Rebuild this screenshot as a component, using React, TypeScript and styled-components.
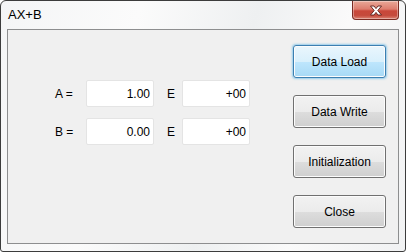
import React from "react";
import styled, { createGlobalStyle } from "styled-components";

const GlobalStyle = createGlobalStyle`
  html, body {
    margin: 0;
    padding: 0;
    background: #ffffff;
  }
  body {
    font-family: "Liberation Sans", Arial, sans-serif;
  }
`;

const Window = styled.div`
  width: 406px;
  height: 252px;
  box-sizing: border-box;
  display: flex;
  flex-direction: column;
  border: 1px solid #3c3c3c;
  border-radius: 6px 6px 3px 3px;
  background: linear-gradient(105deg, #f4f5f6 0%, #fbfbfb 30%, #eef0f1 55%, #fafafa 75%, #f1f2f3 100%);
  overflow: hidden;
`;

const TitleBar = styled.div`
  height: 28px;
  flex: none;
  display: flex;
  justify-content: space-between;
  align-items: flex-start;
`;

const Title = styled.span`
  margin: 6px 0 0 7px;
  font-size: 13px;
  color: #000;
`;

const CloseButton = styled.button`
  width: 47px;
  height: 19px;
  margin-right: 6px;
  padding: 0;
  display: flex;
  align-items: center;
  justify-content: center;
  border: 1px solid #7a2b22;
  border-top: none;
  border-radius: 0 0 4px 4px;
  background: linear-gradient(180deg, #e9a898 0%, #dd7d6e 45%, #c9473a 55%, #c54a3c 80%, #dc8373 100%);
  box-shadow: inset 0 0 0 1px rgba(255, 255, 255, 0.35);
`;

const Client = styled.div`
  flex: 1;
  margin: 0 6px 7px 6px;
  border: 1px solid #8d8e8f;
  background: #f0f0f0;
  display: flex;
  justify-content: space-between;
`;

const Form = styled.div`
  margin: 50px 0 0 47px;
  display: grid;
  grid-template-columns: 31px 68px 28px 68px;
  grid-auto-rows: 27px;
  row-gap: 11px;
  align-items: center;
`;

const Label = styled.span<{ $indent?: number }>`
  font-size: 12px;
  color: #000;
  padding-left: ${(p) => p.$indent ?? 0}px;
`;

const Field = styled.div`
  height: 27px;
  box-sizing: border-box;
  display: flex;
  align-items: center;
  justify-content: flex-end;
  padding-right: 3px;
  background: #ffffff;
  border: 1px solid #e4e4e4;
  border-radius: 2px;
  font-size: 12px;
  color: #000;
`;

const ButtonColumn = styled.div`
  margin: 15px 12px 0 0;
  display: flex;
  flex-direction: column;
  gap: 17px;
`;

const Button = styled.button<{ $active?: boolean }>`
  width: 93px;
  height: 33px;
  padding: 0;
  font-family: "Liberation Sans", Arial, sans-serif;
  font-size: 12px;
  color: #000;
  border-radius: 3px;
  border: 1px solid ${(p) => (p.$active ? "#3c7fb1" : "#707070")};
  background: ${(p) =>
    p.$active
      ? "linear-gradient(180deg, #eaf6fd 0%, #d9f0fc 50%, #bee6fd 51%, #a7d9f5 100%)"
      : "linear-gradient(180deg, #f2f2f2 0%, #ebebeb 50%, #dddddd 51%, #cfcfcf 100%)"};
  box-shadow: ${(p) =>
    p.$active
      ? "inset 0 0 0 1px #fcfcfc, 0 0 2px 1px rgba(75, 175, 230, 0.55)"
      : "inset 0 0 0 1px #fcfcfc"};
`;

function CloseGlyph() {
  return (
    <svg width="14" height="11" viewBox="0 0 14 11">
      <path
        d="M1.5 1 H5 L7 3.6 L9 1 H12.5 L8.8 5.5 L12.5 10 H9 L7 7.4 L5 10 H1.5 L5.2 5.5 Z"
        fill="#ffffff"
        stroke="#5a1e18"
        strokeWidth="0.9"
        strokeLinejoin="round"
      />
    </svg>
  );
}

const rows = [
  { name: "A =", value: "1.00", exp: "+00" },
  { name: "B =", value: "0.00", exp: "+00" },
];

const actions = ["Data Load", "Data Write", "Initialization", "Close"];

export default function App() {
  return (
    <>
      <GlobalStyle />
      <Window>
        <TitleBar>
          <Title>AX+B</Title>
          <CloseButton aria-label="Close">
            <CloseGlyph />
          </CloseButton>
        </TitleBar>
        <Client>
          <Form>
            {rows.map((r) => (
              <React.Fragment key={r.name}>
                <Label>{r.name}</Label>
                <Field>{r.value}</Field>
                <Label $indent={13}>E</Label>
                <Field>{r.exp}</Field>
              </React.Fragment>
            ))}
          </Form>
          <ButtonColumn>
            {actions.map((a, i) => (
              <Button key={a} $active={i === 0}>
                {a}
              </Button>
            ))}
          </ButtonColumn>
        </Client>
      </Window>
    </>
  );
}
